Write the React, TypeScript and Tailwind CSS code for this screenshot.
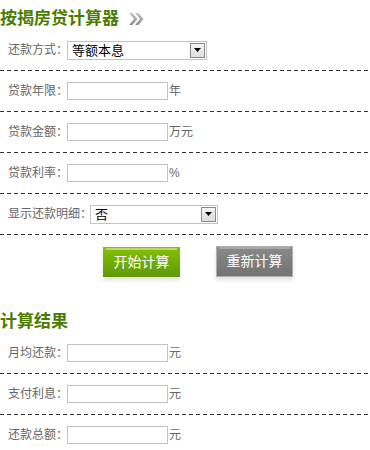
import type { ReactNode } from "react";

// ─── Parts ────────────────────────────────────────────────────────────────

const FONT = "font-['Liberation_Sans','Noto_Sans_CJK_SC',sans-serif]";

function Dash() {
  return (
    <div className="h-px w-full bg-[linear-gradient(to_right,#333_4px,transparent_4px)] bg-[length:7px_1px] bg-repeat-x" />
  );
}

function Row({ label, wide, children }: { label: string; wide?: boolean; children: ReactNode }) {
  return (
    <div className="flex h-[40px] items-center pl-[8px]">
      <span className={`${wide ? "w-[82px]" : "w-[59px]"} shrink-0 whitespace-nowrap text-[12px] text-[#666]`}>
        {label}
      </span>
      {children}
    </div>
  );
}

function TextBox({ unit }: { unit: string }) {
  return (
    <>
      <input
        type="text"
        className="h-[18px] w-[101px] border border-[#c3c3c3] bg-white px-1 text-[12px] outline-none"
      />
      <span className="ml-[1px] text-[12px] text-[#666]">{unit}</span>
    </>
  );
}

function Select({ value, width }: { value: string; width: string }) {
  return (
    <div className={`flex h-[19px] ${width} items-center border border-[#c3c3c3] bg-white`}>
      <span className="flex-1 pl-[4px] text-[13px] leading-none text-black">{value}</span>
      <span className="mr-[1px] flex h-[15px] w-[15px] items-center justify-center border border-[#8a8a8a] bg-[linear-gradient(#f4f4f4,#dcdcdc)]">
        <svg width="7" height="4" viewBox="0 0 7 4">
          <path d="M0 0h7L3.5 4z" fill="#000" />
        </svg>
      </span>
    </div>
  );
}

function Chevrons() {
  return (
    <svg width="15" height="12" viewBox="0 0 15 12" className="ml-[10px]">
      <defs>
        <linearGradient id="cg" x1="0" y1="0" x2="0" y2="1">
          <stop offset="0" stopColor="#c8c8c8" />
          <stop offset="1" stopColor="#8c8c8c" />
        </linearGradient>
      </defs>
      <path d="M0 0h3.5l5 6-5 6H0l5-6z" fill="url(#cg)" />
      <path d="M6 0h3.5l5 6-5 6H6l5-6z" fill="url(#cg)" />
    </svg>
  );
}

// ─── Page ─────────────────────────────────────────────────────────────────

export default function App() {
  return (
    <div className={`${FONT} w-[370px] h-[450px] overflow-hidden bg-white`}>
      {/* Title */}
      <div className="flex h-[30px] items-end pb-[1px]">
        <h2 className="text-[17px] font-bold leading-[20px] text-[#4b7c00]">按揭房贷计算器</h2>
        <span className="mb-[4px]"><Chevrons /></span>
      </div>

      <Row label="还款方式：">
        <Select value="等额本息" width="w-[140px]" />
      </Row>
      <Dash />
      <Row label="贷款年限：">
        <TextBox unit="年" />
      </Row>
      <Dash />
      <Row label="贷款金额：">
        <TextBox unit="万元" />
      </Row>
      <Dash />
      <Row label="贷款利率：">
        <TextBox unit="%" />
      </Row>
      <Dash />
      <Row label="显示还款明细：" wide>
        <Select value="否" width="w-[128px]" />
      </Row>
      <Dash />

      {/* Buttons */}
      <div className="flex gap-[36px] pl-[103px] pt-[12px]">
        <button className="relative h-[30px] w-[77px] bg-[linear-gradient(#86c00c,#5f9805)] text-[14px] text-white shadow-[0_3px_4px_rgba(0,0,0,0.12)]">
          <span className="absolute inset-x-[3px] top-[1px] h-[2px] bg-[#b6dd5c]" />
          开始计算
        </button>
        <button className="relative -mt-[1px] h-[31px] w-[77px] border border-[#b0b0b0] bg-[linear-gradient(#898989,#737373)] text-[14px] text-white shadow-[0_3px_4px_rgba(0,0,0,0.12)]">
          <span className="absolute inset-x-[2px] top-0 h-[2px] bg-[#a8a8a8]" />
          重新计算
        </button>
      </div>

      {/* Results */}
      <div className="flex h-[56px] items-end pb-[1px]">
        <h2 className="text-[17px] font-bold leading-[20px] text-[#4b7c00]">计算结果</h2>
      </div>
      <Row label="月均还款：">
        <TextBox unit="元" />
      </Row>
      <Dash />
      <Row label="支付利息：">
        <TextBox unit="元" />
      </Row>
      <Dash />
      <Row label="还款总额：">
        <TextBox unit="元" />
      </Row>
    </div>
  );
}
